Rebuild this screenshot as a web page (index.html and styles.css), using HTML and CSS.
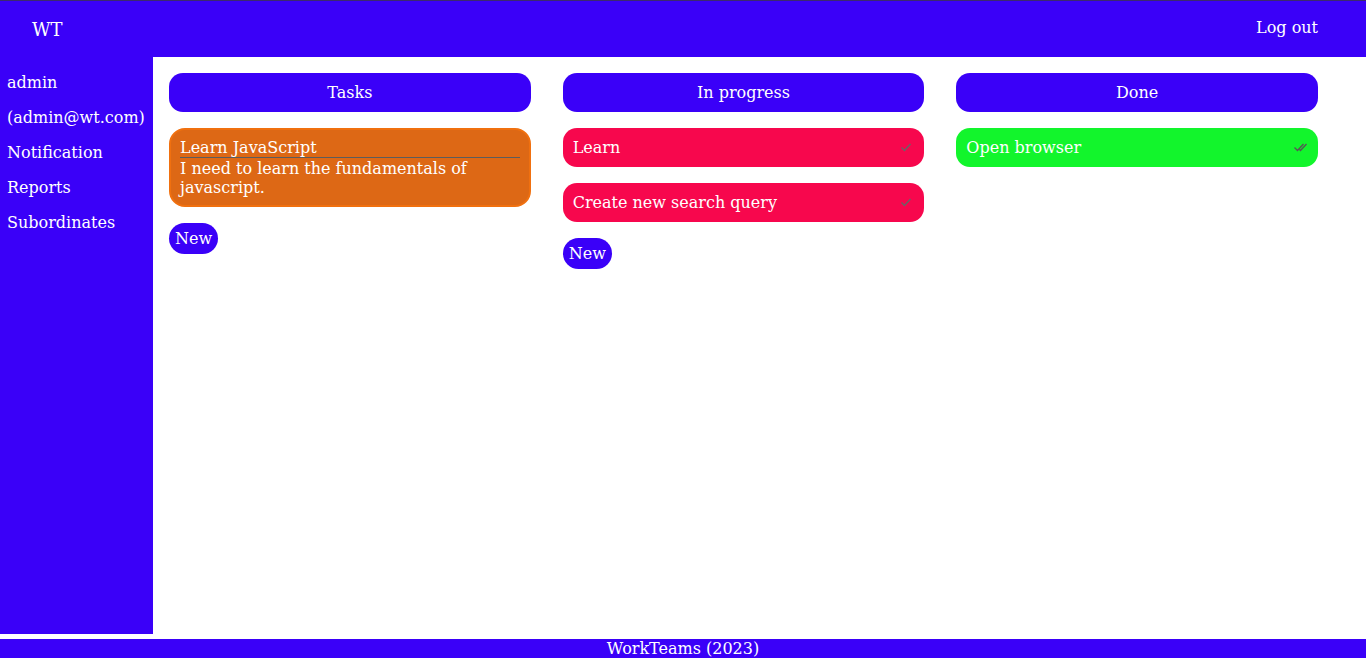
FILE: index.html
```html
<!DOCTYPE html>
<html>
<head>
<meta charset="utf-8">
<link rel="stylesheet" href="styles.css">
</head>
<body>
<div class="page">
  <header class="topbar">
    <div class="brand">WT</div>
    <a class="logout">Log out</a>
  </header>
  <div class="middle">
    <nav class="sidebar">
      <div class="side-item">admin</div>
      <div class="side-item">(admin@wt.com)</div>
      <div class="side-item">Notification</div>
      <div class="side-item">Reports</div>
      <div class="side-item">Subordinates</div>
    </nav>
    <main class="board">
      <section class="column">
        <div class="col-head">Tasks</div>
        <div class="card card-todo">
          <div class="card-title">Learn JavaScript</div>
          <hr class="card-rule">
          <div class="card-desc">I need to learn the fundamentals of javascript.</div>
        </div>
        <div><button class="new-btn">New</button></div>
      </section>
      <section class="column">
        <div class="col-head">In progress</div>
        <div class="card card-progress">
          <span>Learn</span>
          <svg class="check" width="12" height="12" viewBox="0 0 12 12"><path d="M1.5 6.5 L4.5 9.5 L10.5 3" fill="none" stroke="#666" stroke-width="1.4"/></svg>
        </div>
        <div class="card card-progress">
          <span>Create new search query</span>
          <svg class="check" width="12" height="12" viewBox="0 0 12 12"><path d="M1.5 6.5 L4.5 9.5 L10.5 3" fill="none" stroke="#666" stroke-width="1.4"/></svg>
        </div>
        <div><button class="new-btn">New</button></div>
      </section>
      <section class="column">
        <div class="col-head">Done</div>
        <div class="card card-done">
          <span>Open browser</span>
          <svg class="check" width="14" height="12" viewBox="0 0 14 12"><path d="M0.5 6.5 L3.5 9.5 L9.5 3 M5.5 8.5 L6.5 9.5 L12.5 3" fill="none" stroke="#555" stroke-width="1.3"/></svg>
        </div>
      </section>
    </main>
  </div>
  <footer class="footer">WorkTeams (2023)</footer>
</div>
</body>
</html>
```
FILE: styles.css
```css
html, body {
  margin: 0;
  padding: 0;
  height: 100%;
  background: #fff;
  font-family: "DejaVu Serif", serif;
  font-size: 16px;
  color: #fff;
}
.page {
  height: 658px;
  display: flex;
  flex-direction: column;
}
.topbar {
  height: 56px;
  border-top: 1px solid #3b2a6e;
  background: #3a00f8;
  display: flex;
  align-items: center;
  justify-content: space-between;
  padding: 0 48px 0 32px;
  flex: none;
}
.brand {
  font-size: 18px;
}
.logout {
  font-size: 16px;
  margin-top: -4px;
  cursor: pointer;
}
.middle {
  display: flex;
  height: 577px;
  flex: none;
}
.sidebar {
  width: 153px;
  background: #3a00f8;
  padding-top: 16px;
  box-sizing: border-box;
}
.side-item {
  padding-left: 7px;
  height: 35px;
  line-height: 20px;
}
.board {
  flex: 1;
  display: flex;
  gap: 32px;
  padding: 16px;
  align-items: flex-start;
}
.column {
  width: 361.67px;
  display: flex;
  flex-direction: column;
  gap: 16px;
}
.col-head {
  height: 39px;
  background: #3a00f8;
  border-radius: 14px;
  display: flex;
  align-items: center;
  justify-content: center;
}
.card {
  border-radius: 14px;
  box-sizing: border-box;
}
.card-todo {
  background: #dd6815;
  border: 2px solid #f0700f;
  padding: 9px 9px 8px 9px;
  border-radius: 16px;
}
.card-title {
  line-height: 18px;
}
.card-rule {
  margin: 0;
  border: none;
  border-top: 1px solid #5c5c5c;
  height: 0;
}
.card-desc {
  line-height: 19px;
  margin-top: 1px;
}
.card-progress, .card-done {
  height: 39px;
  display: flex;
  align-items: center;
  justify-content: space-between;
  padding: 0 12px 0 10px;
}
.card-progress {
  background: #f7074d;
}
.card-done {
  background: #12f52c;
  padding-right: 10px;
}
.check {
  margin-top: -2px;
}
.new-btn {
  font-family: "DejaVu Serif", serif;
  font-size: 16px;
  color: #fff;
  background: #3a00f8;
  border: none;
  border-radius: 16px;
  height: 31px;
  padding: 0 6px;
  cursor: pointer;
}
.footer {
  margin-top: 5px;
  height: 19px;
  background: #3a00f8;
  text-align: center;
  line-height: 19px;
  flex: none;
}
```
